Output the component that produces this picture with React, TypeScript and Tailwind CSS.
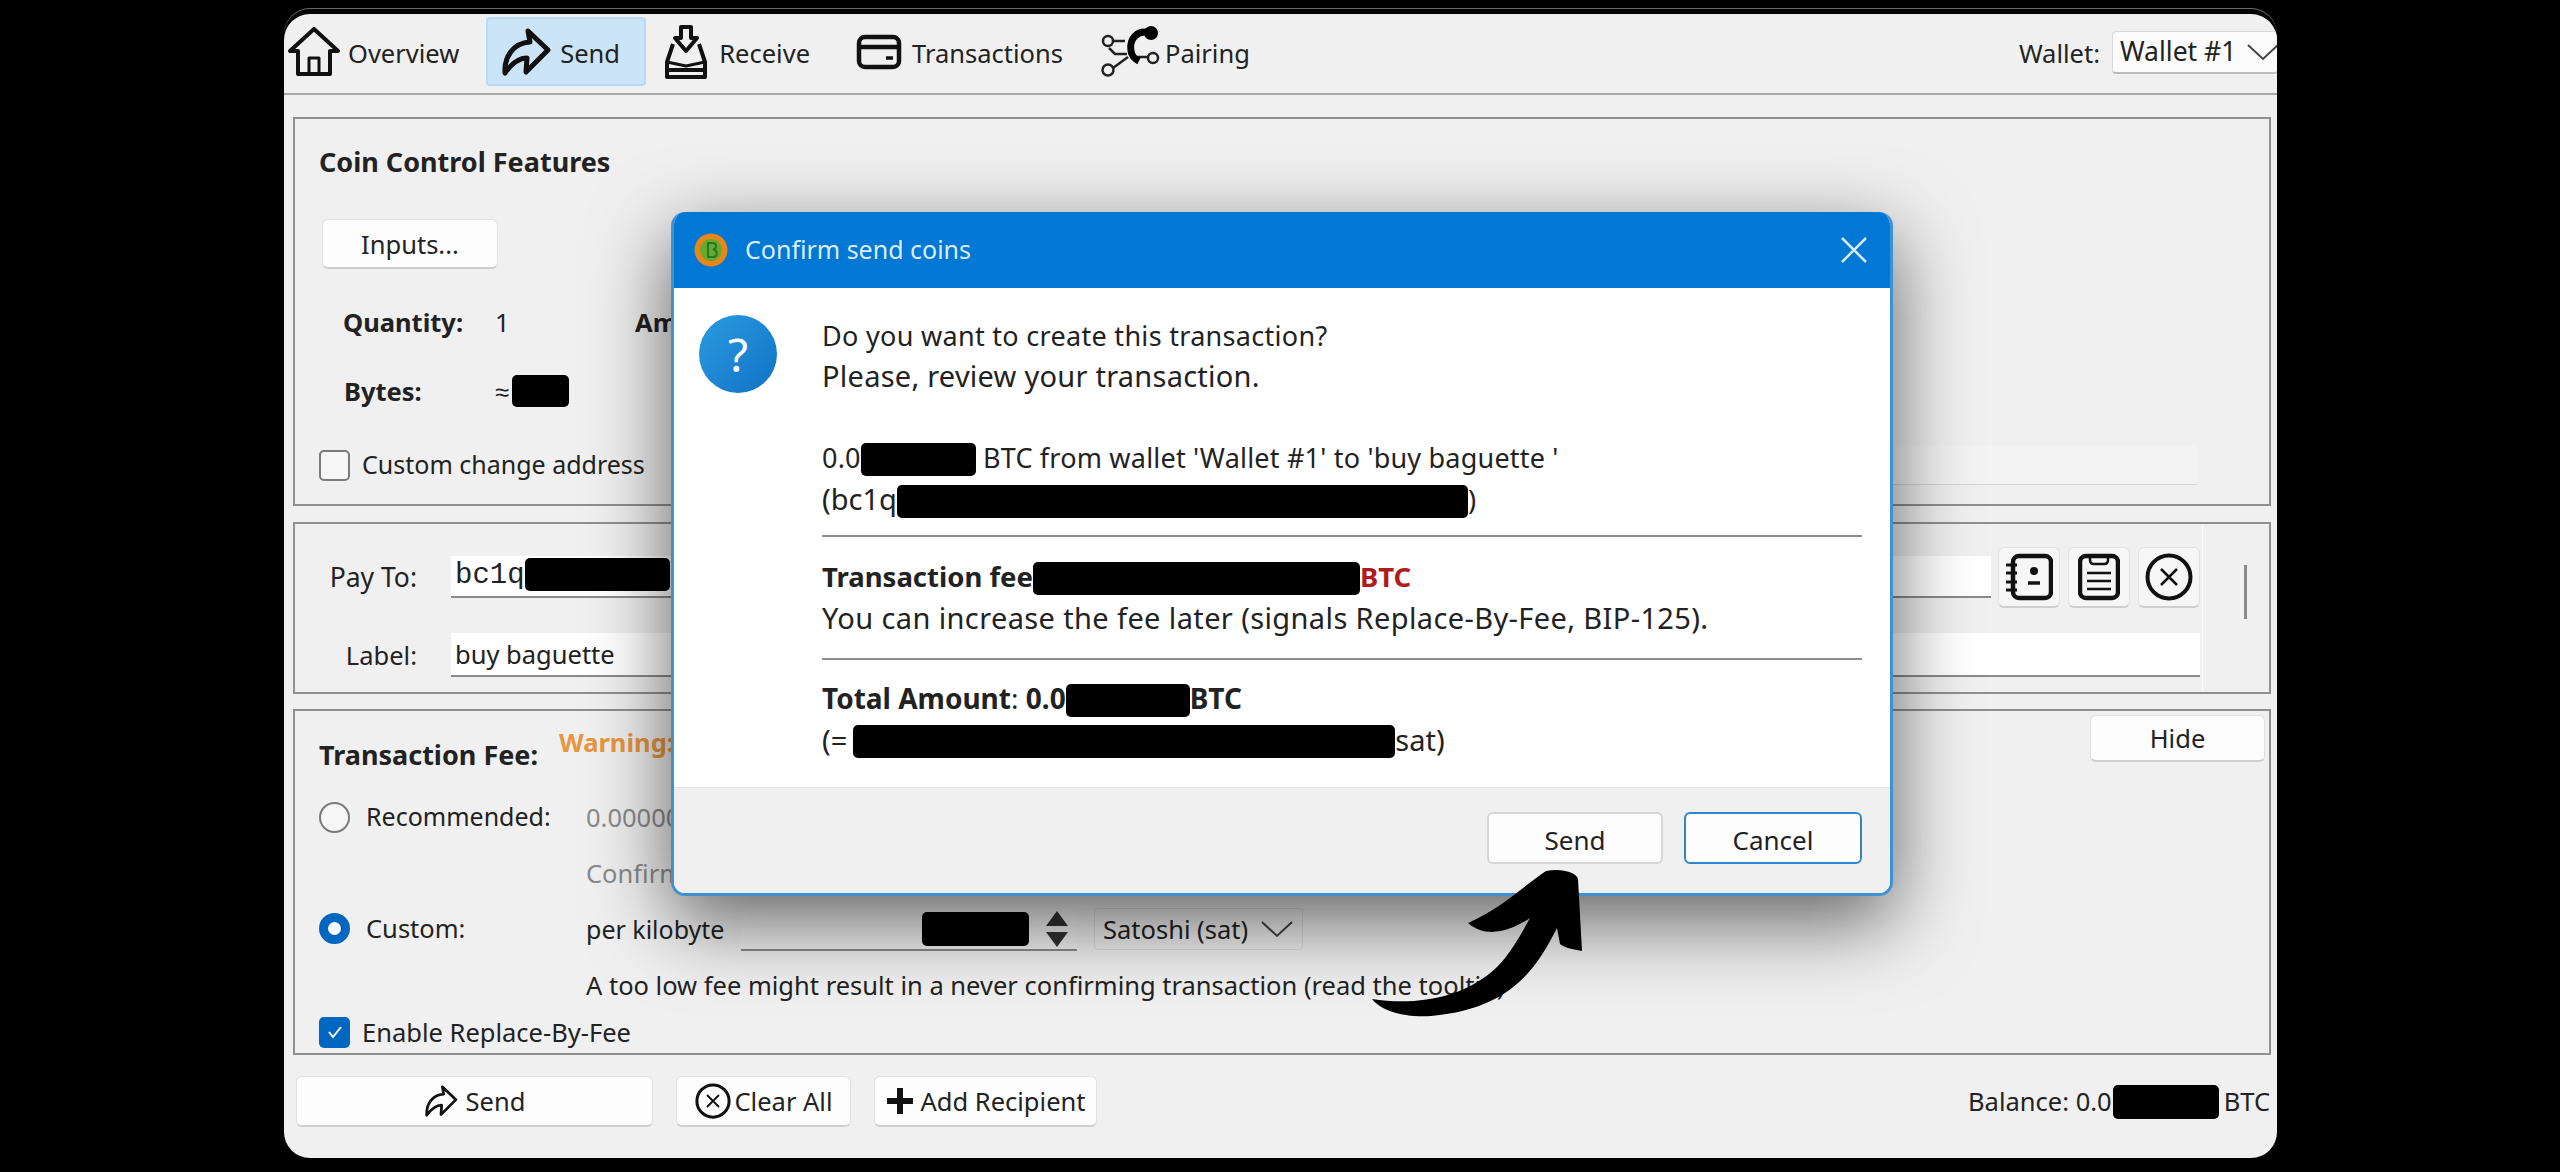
import React from "react";

const font = "font-['Noto_Sans','Liberation_Sans',sans-serif]";

const Bar = ({ className }: { className: string }) => (
  <span className={`inline-block bg-black rounded-[5px] align-middle ${className}`} />
);

const HouseIcon = () => (
  <svg width="52" height="50" viewBox="0 0 52 50" fill="none" stroke="#111" strokeWidth="4" strokeLinejoin="round" strokeLinecap="round">
    <path d="M2 24 L26 2 L50 24 L42 24 L42 47 L10 47 L10 24 Z" />
    <path d="M21 47 V31 H31 V47" strokeWidth="3" />
  </svg>
);

const SendIcon = ({ size, stroke }: { size: number; stroke: number }) => (
  <svg width={size} height={size} viewBox="0 0 50 50" fill="none" stroke="#111" strokeWidth={stroke} strokeLinejoin="round">
    <path d="M27 4 L47 23 L25 45 L26 31 C18 31 11 36 4 46 C3 30 12 16 29 15 Z" />
  </svg>
);

const ReceiveIcon = () => (
  <svg width="46" height="56" viewBox="0 0 46 56" fill="none" stroke="#111" strokeWidth="4" strokeLinejoin="round">
    <path d="M18 14 V3 H28 V14 H34 L23 27 L12 14 Z" />
    <path d="M10 20 L4 38 V53 H42 V38 L36 20" />
    <path d="M4 38 L23 42 L42 38" strokeWidth="3" />
    <path d="M4 46 H42" strokeWidth="4" />
  </svg>
);

const CardIcon = () => (
  <svg width="46" height="36" viewBox="0 0 46 36" fill="none" stroke="#111" strokeWidth="4.5">
    <rect x="3" y="3" width="40" height="30" rx="6" />
    <path d="M3 13 H43" />
    <path d="M30 24 H37" strokeWidth="3.5" />
  </svg>
);

const PairIcon = () => (
  <svg width="60" height="54" viewBox="0 0 60 54" fill="none" stroke="#222" strokeWidth="2.5">
    <circle cx="7" cy="16" r="5" />
    <circle cx="7" cy="45" r="5.5" />
    <circle cx="52" cy="33" r="5" />
    <path d="M12 16 H24 M12 43 L27 32 M30 32 H47 M8 23 L14 29 H26" />
    <path d="M50 8 C36 4 28 14 30 26 C31 32 34 34 38 36" stroke="#000" strokeWidth="7" />
    <circle cx="50" cy="8" r="7" fill="#000" stroke="none" />
  </svg>
);

const BookIcon = () => (
  <svg width="48" height="48" viewBox="0 0 48 48" fill="none" stroke="#111" strokeWidth="4.5">
    <rect x="8" y="3" width="38" height="42" rx="6" />
    <path d="M1 12 H12 M1 20 H12 M1 29 H12 M1 37 H12" strokeWidth="3" />
    <circle cx="29" cy="18" r="4" fill="#111" stroke="none" />
    <path d="M23 30 H35" strokeWidth="3.5" />
  </svg>
);

const ClipIcon = () => (
  <svg width="42" height="48" viewBox="0 0 42 48" fill="none" stroke="#111" strokeWidth="4.5">
    <rect x="2" y="3" width="38" height="42" rx="6" />
    <path d="M12 3 V7 C12 10 14 11 16 11 H26 C28 11 30 10 30 7 V3" strokeWidth="2.5" />
    <path d="M9 20 H33 M9 28 H33 M9 36 H33" strokeWidth="2.5" />
  </svg>
);

const XCircleIcon = ({ size }: { size: number }) => (
  <svg width={size} height={size} viewBox="0 0 48 48" fill="none" stroke="#111">
    <circle cx="24" cy="24" r="21.5" strokeWidth="4" />
    <path d="M16 16 L32 32 M32 16 L16 32" strokeWidth="2.5" />
  </svg>
);

const Chevron = () => (
  <svg width="34" height="18" viewBox="0 0 34 18" fill="none" stroke="#444" strokeWidth="2" className="shrink-0">
    <path d="M2 2 L17 16 L32 2" />
  </svg>
);

const CoinIcon = () => (
  <svg width="34" height="34" viewBox="0 0 34 34">
    <circle cx="17" cy="17" r="16.5" fill="#e8861c" />
    <circle cx="17" cy="17" r="11" fill="#6ba82e" />
    <path d="M14 9 V25 M14 10 H19 C23 10 23 16 19 16.5 C24 17 24 24 19 24 H14" fill="none" stroke="#1f7a2e" strokeWidth="2" />
  </svg>
);

const CurvedArrow = () => (
  <svg width="212" height="149" viewBox="0 0 212 149" className="absolute left-[1087px] top-[855px]">
    <path
      d="M1 130 C40 136 90 132 126 98 C140 84 150 65 159 49 C140 62 115 70 97 54 C130 40 155 15 175 2 C190 -1 205 3 207 10 L211 82 C200 80 192 78 189 75 L186 59 C165 100 140 140 60 147 C35 149 10 142 1 130 Z"
      fill="#000"
    />
  </svg>
);

const NavItem = ({ icon, label, active, className, gap }: { icon: React.ReactNode; label: string; active?: boolean; className: string; gap: string }) => (
  <div
    className={`flex items-center h-[69px] rounded-[4px] ${className} ${
      active ? "bg-[#cce4f7] border-2 border-[#b6d9f5]" : ""
    }`}
  >
    {icon}
    <span className={`${gap} pt-[4px] text-[#222]`}>{label}</span>
  </div>
);

const Dialog = () => (
  <div className="absolute left-[387px] top-[198px] w-[1222px] h-[684px] rounded-[14px] border-[3px] border-t-0 border-[#3f91d6] bg-white flex flex-col overflow-hidden shadow-[0_25px_80px_rgba(0,0,0,0.6)]">
    <div className="h-[76px] -mx-[3px] bg-[#0078d4] flex items-center pl-[23px] pr-[26px] shrink-0">
      <CoinIcon />
      <span className="ml-[17px] text-[25px] text-[#dcecf9]">Confirm send coins</span>
      <svg width="26" height="26" viewBox="0 0 26 26" className="ml-auto" stroke="#d8ebfa" strokeWidth="2.5">
        <path d="M1 1 L25 25 M25 1 L1 25" />
      </svg>
    </div>
    <div className="flex flex-1 bg-white pt-[26px] pl-[25px] pr-[28px]">
      <div className="w-[78px] h-[78px] rounded-full bg-gradient-to-br from-[#2a9be2] to-[#1272c4] flex items-center justify-center text-white text-[46px] leading-none shrink-0 mt-[1px]">
        ?
      </div>
      <div className="ml-[45px] flex-1 text-[27px] leading-[41px] text-[#222] whitespace-nowrap">
        <div className="tracking-[0.3px] pt-[1px] -mb-[1px]">Do you want to create this transaction?</div>
        <div className="text-[29px] tracking-[0.25px]">Please, review your transaction.</div>
        <div className="mt-[41px] tracking-[0.2px]">
          0.0
          <Bar className="w-[115px] h-[33px] -mt-[3px]" /> BTC from wallet 'Wallet #1' to 'buy baguette '
        </div>
        <div>
          <span className="text-[29px]">(bc1q</span>
          <Bar className="w-[571px] h-[33px] -mt-[3px]" />)
        </div>
        <div className="mt-[15px] mb-[19px] h-[2px] bg-[#8e8e8e]" />
        <div className="text-[27.5px] font-bold">
          Transaction fee
          <Bar className="w-[327px] h-[33px] -mt-[3px]" />
          <span className="text-[#b01c1c]">BTC</span>
        </div>
        <div className="text-[29px] tracking-[0.38px]">You can increase the fee later (signals Replace-By-Fee, BIP-125).</div>
        <div className="mt-[20px] mb-[18px] h-[2px] bg-[#8e8e8e]" />
        <div className="text-[28px]">
          <span className="font-bold">Total Amount</span>: <span className="font-bold">0.0</span>
          <Bar className="w-[124px] h-[33px] -mt-[3px]" />
          <span className="font-bold">BTC</span>
        </div>
        <div className="text-[29px]">
          (=
          <Bar className="w-[542px] h-[33px] -mt-[3px] ml-[6px]" />
          sat)
        </div>
      </div>
    </div>
    <div className="h-[106px] bg-[#f0f0f0] border-t border-[#e6e6e6] flex items-start justify-end pt-[24px] pr-[28px] gap-[21px] shrink-0">
      <button className="w-[176px] h-[52px] pt-[4px] rounded-[6px] bg-[#fdfdfd] border-2 border-[#d6d6d6] text-[26px] text-[#222]">Send</button>
      <button className="w-[178px] h-[52px] pt-[4px] rounded-[6px] bg-[#fdfdfd] border-2 border-[#2f86cf] text-[26px] text-[#222]">Cancel</button>
    </div>
  </div>
);

const WhiteButton = ({ className, children }: { className: string; children: React.ReactNode }) => (
  <button className={`flex items-center justify-center rounded-[6px] bg-[#fdfdfd] border border-[#e2e2e2] border-b-2 border-b-[#cfcfcf] text-[#222] ${className}`}>
    {children}
  </button>
);

const Radio = ({ on }: { on?: boolean }) =>
  on ? (
    <span className="w-[31px] h-[31px] rounded-full border-[9px] border-[#0067c0] bg-white shrink-0" />
  ) : (
    <span className="w-[31px] h-[31px] rounded-full border-2 border-[#7a7a7a] bg-[#f6f6f6] shrink-0" />
  );

export default function App() {
  return (
    <div className={`h-[1172px] w-[2560px] bg-black pt-[14px] pl-[284px] overflow-hidden ${font}`}>
      <div className="relative w-[1993px] h-[1144px] rounded-[26px] bg-[#f0f0f0] flex flex-col text-[25.5px] text-[#222] shadow-[0_-5px_0_0_#000,0_-6px_0_0_#6a6a6a]">
        <div className="overflow-hidden rounded-[26px] flex flex-col h-full">
          {/* toolbar */}
          <div className="h-[81px] shrink-0 border-b-2 border-[#a8a8a8] flex items-center pb-[4px]">
            <NavItem className="ml-[4px]" gap="ml-[8px]" icon={<HouseIcon />} label="Overview" />
            <NavItem className="ml-[27px] w-[160px] pl-[13px]" gap="ml-[9px]" active icon={<SendIcon size={50} stroke={5} />} label="Send" />
            <NavItem className="ml-[17px]" gap="ml-[10px]" icon={<ReceiveIcon />} label="Receive" />
            <NavItem className="ml-[46px]" gap="ml-[10px]" icon={<CardIcon />} label="Transactions" />
            <NavItem className="ml-[38px]" gap="ml-[4px]" icon={<PairIcon />} label="Pairing" />
            <span className="ml-auto pt-[4px]">Wallet:</span>
            <div className="ml-[12px] mt-[2px] w-[166px] h-[43px] -mr-[1px] bg-[#fbfbfb] border border-[#d8d8d8] border-b-2 border-b-[#bdbdbd] rounded-[4px] flex items-center pl-[7px] gap-[10px] whitespace-nowrap overflow-hidden shrink-0 text-[26.5px]">
              Wallet #1
              <Chevron />
            </div>
          </div>

          {/* main panels */}
          <div className="flex-1 flex flex-col pl-[9px] pr-[6px] pt-[22px]">
            <div className="h-[389px] border-2 border-[#8f8f8f] pl-[24px] pr-[72px] pt-[24px]">
              <div className="font-bold h-[38px] leading-[38px] text-[27px]">Coin Control Features</div>
              <WhiteButton className="mt-[38px] ml-[3px] w-[176px] h-[50px] pt-[1px]">Inputs...</WhiteButton>
              <div className="flex mt-[33px] h-[40px] items-center ml-[24px]">
                <span className="font-bold w-[152px]">Quantity:</span>
                <span className="w-[140px]">1</span>
                <span className="font-bold">Amount:</span>
              </div>
              <div className="flex mt-[29px] h-[40px] items-center ml-[25px]">
                <span className="font-bold w-[151px]">Bytes:</span>
                <span>≈</span>
                <Bar className="w-[57px] h-[32px] ml-[3px]" />
              </div>
              <div className="flex mt-[34px] h-[40px] items-center">
                <span className="w-[31px] h-[31px] rounded-[5px] border-2 border-[#7a7a7a] bg-[#f6f6f6] shrink-0" />
                <span className="ml-[12px] whitespace-nowrap text-[25px]">Custom change address</span>
                <div className="flex-1 h-[40px] ml-[30px] border-b border-[#d6d6d6] bg-[#f3f3f3]" />
              </div>
            </div>

            <div className="mt-[16px] h-[172px] border-2 border-[#8f8f8f] flex">
              <div className="flex-1 pt-[23px]">
                <div className="flex items-center h-[61px]">
                  <span className="w-[122px] text-right text-[26.5px]">Pay To:</span>
                  <div className="ml-[34px] flex-1 h-[42px] -mt-[2px] bg-white border-b-2 border-[#8a8a8a] flex items-center pl-[4px] font-['Liberation_Mono',monospace] text-[29px]">
                    bc1q
                    <Bar className="w-[145px] h-[33px] -mt-[3px]" />
                  </div>
                  <div className="flex ml-[7px] gap-[8px]">
                    <WhiteButton className="w-[62px] h-[61px] !bg-[#f6f6f6]"><BookIcon /></WhiteButton>
                    <WhiteButton className="w-[62px] h-[61px] !bg-[#f6f6f6]"><ClipIcon /></WhiteButton>
                    <WhiteButton className="w-[62px] h-[61px] !bg-[#f6f6f6]"><XCircleIcon size={48} /></WhiteButton>
                  </div>
                </div>
                <div className="flex items-center mt-[25px] h-[44px]">
                  <span className="w-[122px] text-right">Label:</span>
                  <div className="ml-[34px] flex-1 h-[44px] bg-white border-b-2 border-[#8a8a8a] flex items-center pl-[4px]">buy baguette</div>
                </div>
              </div>
              <div className="w-[67px] ml-[2px] border-l border-[#fafafa] flex shrink-0 pt-[41px] pl-[41px]">
                <div className="w-[3px] h-[54px] bg-[#8a8a8a]" />
              </div>
            </div>

            <div className="mt-[15px] h-[346px] border-2 border-b-2 border-[#8f8f8f] pl-[24px] pr-[4px] flex flex-col">
              <div className="flex h-[55px] items-start">
                <span className="font-bold mt-[24px] text-[27px]">Transaction Fee:</span>
                <span className="font-bold text-[#e8963e] ml-[21px] mt-[12px] whitespace-nowrap">Warning: this is a custom fee</span>
                <WhiteButton className="ml-auto mt-[4px] w-[175px] h-[47px] pt-[1px]">Hide</WhiteButton>
              </div>
              <div className="flex items-center h-[40px] mt-[31px]">
                <Radio />
                <span className="ml-[16px] w-[220px] text-[25px]">Recommended:</span>
                <span className="text-[#8a8a8a]">0.00000 BTC/kB</span>
              </div>
              <div className="pl-[267px] h-[40px] leading-[40px] text-[#8a8a8a] mt-[16px]">Confirmation time target:</div>
              <div className="flex items-center h-[44px] mt-[13px]">
                <Radio on />
                <span className="ml-[16px] w-[220px]">Custom:</span>
                <span className="w-[155px] pt-[4px] text-[25px]">per kilobyte</span>
                <div className="w-[336px] h-[42px] mt-[4px] bg-[#f2f2f2] border-b-2 border-[#8a8a8a] flex items-center justify-end pr-[48px] relative">
                  <Bar className="w-[107px] h-[34px]" />
                  <svg width="26" height="38" viewBox="0 0 26 38" className="absolute right-[7px] top-[1px]" fill="#333">
                    <path d="M13 1 L24 16 H2 Z M2 22 H24 L13 37 Z" />
                  </svg>
                </div>
                <div className="ml-[17px] w-[209px] h-[42px] mt-[2px] border border-[#dcdcdc] rounded-[4px] flex items-center pl-[8px] gap-[12px] whitespace-nowrap bg-[#f0f0f0]">
                  Satoshi (sat)
                  <Chevron />
                </div>
              </div>
              <div className="pl-[267px] mt-[15px] h-[40px] leading-[40px] whitespace-nowrap">A too low fee might result in a never confirming transaction (read the tooltip)</div>
              <div className="flex items-center mt-[7px] h-[40px]">
                <span className="w-[31px] h-[31px] rounded-[5px] bg-[#0067c0] flex items-center justify-center shrink-0">
                  <svg width="18" height="18" viewBox="0 0 18 18" fill="none" stroke="#fff" strokeWidth="2">
                    <path d="M3 9 L7 14 L15 4" />
                  </svg>
                </span>
                <span className="ml-[12px]">Enable Replace-By-Fee</span>
              </div>
            </div>

            {/* footer */}
            <div className="flex items-center mt-[21px] h-[51px] pl-[3px] pr-[1px]">
              <WhiteButton className="w-[357px] h-[51px] gap-[8px]">
                <SendIcon size={34} stroke={4} />
                Send
              </WhiteButton>
              <WhiteButton className="ml-[23px] w-[175px] h-[51px] gap-[4px]">
                <XCircleIcon size={36} />
                Clear All
              </WhiteButton>
              <WhiteButton className="ml-[23px] w-[223px] h-[51px] gap-[7px]">
                <svg width="28" height="28" viewBox="0 0 28 28" stroke="#111" strokeWidth="6">
                  <path d="M14 1 V27 M1 14 H27" />
                </svg>
                Add Recipient
              </WhiteButton>
              <span className="ml-auto">Balance: 0.0</span>
              <Bar className="w-[106px] h-[34px] ml-[1px] mr-[5px]" />
              <span>BTC</span>
            </div>
          </div>
        </div>
        <Dialog />
        <CurvedArrow />
      </div>
    </div>
  );
}
